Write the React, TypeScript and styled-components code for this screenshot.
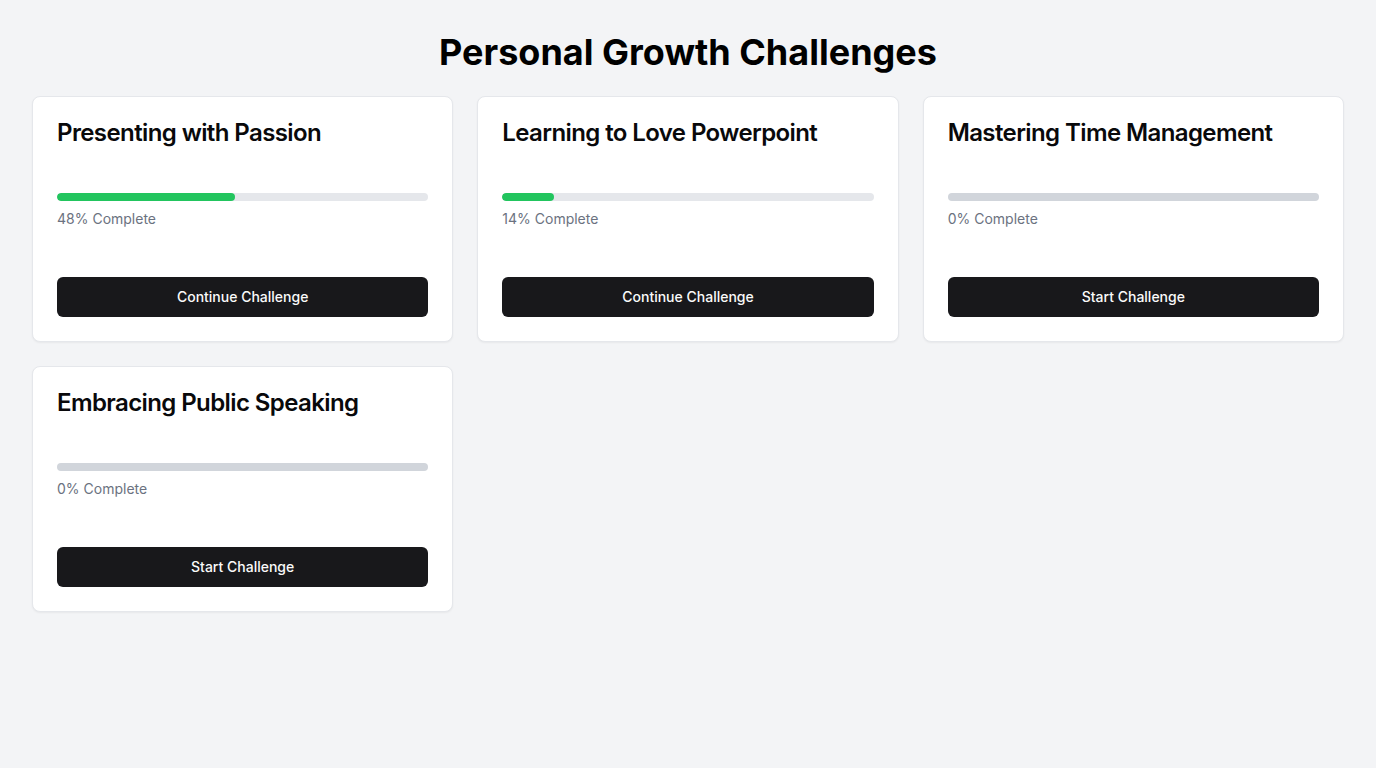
import styled, { createGlobalStyle } from 'styled-components';

interface Challenge {
  title: string;
  progress: number;
}

const challenges: Challenge[] = [
  { title: 'Presenting with Passion', progress: 48 },
  { title: 'Learning to Love Powerpoint', progress: 14 },
  { title: 'Mastering Time Management', progress: 0 },
  { title: 'Embracing Public Speaking', progress: 0 },
];

const GlobalStyle = createGlobalStyle`
  body {
    margin: 0;
    background-color: #f3f4f6;
    font-family: Inter, "Noto Sans", sans-serif;
    color: #09090b;
  }
`;

const Page = styled.div`
  min-height: 100vh;
  padding: 32px;
  box-sizing: border-box;
`;

const Heading = styled.h1`
  margin: 0 0 24px;
  font-size: 36px;
  line-height: 40px;
  font-weight: 700;
  text-align: center;
  color: #000;
`;

const Grid = styled.div`
  display: grid;
  grid-template-columns: repeat(3, 1fr);
  gap: 24px;
`;

const Card = styled.div`
  background: #fff;
  border: 1px solid #e5e7eb;
  border-radius: 8px;
  box-shadow: 0 1px 2px rgba(0, 0, 0, 0.05);
  padding: 24px;
  display: flex;
  flex-direction: column;
`;

const Title = styled.h2`
  margin: 0;
  font-size: 24px;
  line-height: 24px;
  font-weight: 600;
  letter-spacing: -0.025em;
`;

const Track = styled.div<{ $empty: boolean }>`
  margin-top: 48px;
  height: 8px;
  border-radius: 9999px;
  background: ${(p) => (p.$empty ? '#d1d5db' : '#e5e7eb')};
  overflow: hidden;
`;

const Fill = styled.div`
  height: 100%;
  background: #22c55e;
  border-radius: 9999px;
`;

const Status = styled.p`
  margin: 8px 0 0;
  font-size: 14px;
  line-height: 20px;
  color: #6b7280;
`;

const Button = styled.button`
  margin-top: 48px;
  height: 40px;
  padding: 0 16px;
  border: none;
  border-radius: 6px;
  background: #18181b;
  color: #fafafa;
  font-family: inherit;
  font-size: 14px;
  line-height: 20px;
  font-weight: 500;
  cursor: pointer;
`;

function App() {
  return (
    <Page>
      <GlobalStyle />
      <Heading>Personal Growth Challenges</Heading>
      <Grid>
        {challenges.map((c) => (
          <Card key={c.title}>
            <Title>{c.title}</Title>
            <Track $empty={c.progress === 0}>
              <Fill style={{ width: `${c.progress}%` }} />
            </Track>
            <Status>{c.progress}% Complete</Status>
            <Button>{c.progress > 0 ? 'Continue Challenge' : 'Start Challenge'}</Button>
          </Card>
        ))}
      </Grid>
    </Page>
  );
}

export default App;
